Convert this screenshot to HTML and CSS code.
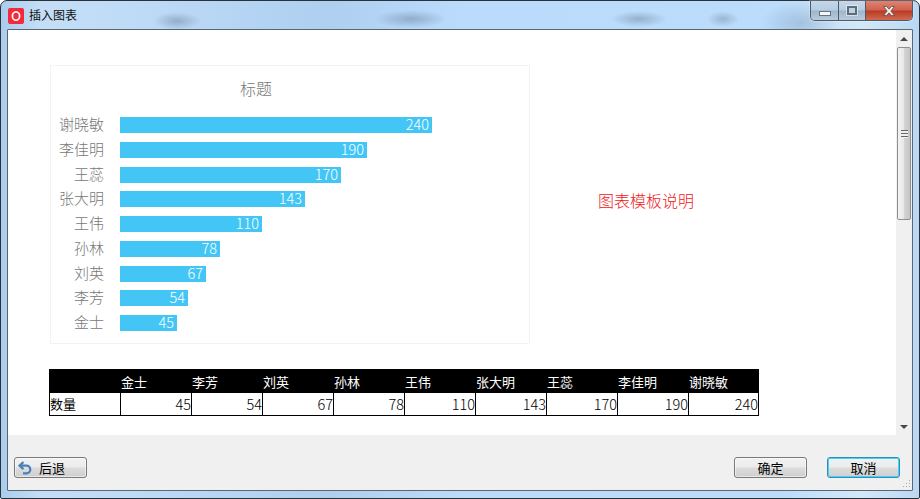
FILE: index.html
```html
<!DOCTYPE html>
<html lang="zh-CN">
<head>
<meta charset="utf-8">
<title>插入图表</title>
<link rel="stylesheet" href="styles.css">
</head>
<body>
<div class="window">
  <header class="titlebar">
    <svg class="app-icon" width="16" height="16" viewBox="0 0 16 16"><rect width="16" height="16" rx="2" fill="#f5293a"/><ellipse cx="8" cy="8" rx="3.6" ry="4.2" fill="none" stroke="#fff" stroke-width="1.7"/></svg>
    <span class="title-text">插入图表</span>
    <div class="caption">
      <div class="cap cap-min"><span class="min-glyph"></span></div>
      <div class="cap cap-max"><span class="max-glyph"></span></div>
      <div class="cap cap-close">
        <svg width="16" height="12" viewBox="0 0 16 12"><path d="M2.500 1.500h3L8 4.200l2.500-2.700h3L9.800 6l3.700 4.500h-3L8 7.800l-2.500 2.700h-3L6.200 6z" fill="#f4f0ee" stroke="#5c4a48" stroke-width=".8"/></svg>
      </div>
    </div>
  </header>
  <div class="client">
    <div class="main">
      <div class="scroll-content">
        <div class="top-row">
          <section class="chart">
            <div class="chart-title">标题</div>
            <div class="chart-rows">
              <div class="row"><span class="label">谢晓敏</span><div class="bar" style="width:312px">240</div></div>
              <div class="row"><span class="label">李佳明</span><div class="bar" style="width:247px">190</div></div>
              <div class="row"><span class="label">王蕊</span><div class="bar" style="width:221px">170</div></div>
              <div class="row"><span class="label">张大明</span><div class="bar" style="width:185px">143</div></div>
              <div class="row"><span class="label">王伟</span><div class="bar" style="width:142px">110</div></div>
              <div class="row"><span class="label">孙林</span><div class="bar" style="width:100px">78</div></div>
              <div class="row"><span class="label">刘英</span><div class="bar" style="width:86px">67</div></div>
              <div class="row"><span class="label">李芳</span><div class="bar" style="width:68px">54</div></div>
              <div class="row"><span class="label">金士</span><div class="bar" style="width:57px">45</div></div>
            </div>
          </section>
          <div class="desc">图表模板说明</div>
        </div>
        <table class="data">
          <tr class="head"><th></th><th>金士</th><th>李芳</th><th>刘英</th><th>孙林</th><th>王伟</th><th>张大明</th><th>王蕊</th><th>李佳明</th><th>谢晓敏</th></tr>
          <tr><td class="name">数量</td><td>45</td><td>54</td><td>67</td><td>78</td><td>110</td><td>143</td><td>170</td><td>190</td><td>240</td></tr>
        </table>
      </div>
      <div class="scrollbar">
        <div class="arrow-btn"><span class="arrow-up"></span></div>
        <div class="thumb"><span class="grip"></span></div>
        <div class="track"></div>
        <div class="arrow-btn arrow-btn-down"><span class="arrow-down"></span></div>
      </div>
    </div>
    <footer class="footer">
      <button class="btn btn-back">
        <svg width="15" height="14" viewBox="0 0 15 14"><path d="M5.500 1 1.500 4.700l4 3.500" fill="none" stroke="#4a80b8" stroke-width="2.200"/><path d="M2 4.700h6.500a3.800 3.800 0 0 1 0 7.600H5" fill="none" stroke="#4a80b8" stroke-width="2.200"/></svg>
        <span>后退</span>
      </button>
      <div class="spacer"></div>
      <button class="btn">确定</button>
      <button class="btn btn-focus">取消</button>
      <svg class="gripper" width="10" height="10" viewBox="0 0 10 10"><path d="M8 1h1v1H8zM5 4h1v1H5zM8 4h1v1H8zM2 7h1v1H2zM5 7h1v1H5zM8 7h1v1H8z" fill="#a8a8a8"/></svg>
    </footer>
  </div>
</div>
</body>
</html>
```
FILE: styles.css
```css
* { box-sizing: border-box; }
html, body { margin: 0; padding: 0; }
body {
  width: 920px;
  height: 499px;
  overflow: hidden;
  background: #fff;
  font-family: "Noto Sans CJK SC", "Liberation Sans", sans-serif;
}
.window {
  width: 920px;
  height: 499px;
  display: flex;
  flex-direction: column;
  padding: 0 6px 7px;
  border: 1px solid #2c3138;
  border-radius: 7px 7px 2px 2px;
  background:
    radial-gradient(ellipse 24px 9px at 176px 20px, rgba(90,110,140,.4), transparent),
    radial-gradient(ellipse 36px 9px at 410px 18px, rgba(90,110,140,.4), transparent),
    radial-gradient(ellipse 28px 8px at 638px 18px, rgba(90,110,140,.4), transparent),
    radial-gradient(ellipse 16px 8px at 722px 18px, rgba(90,110,140,.35), transparent),
    radial-gradient(ellipse 40px 22px at 800px 22px, rgba(120,150,185,.4), transparent),
    linear-gradient(90deg, #a9cdee 0, #c4def6 40px, #bedbf7 130px, #aecff0 330px, #badbfb 460px, #bcdcfb 780px, #d3e8f9 860px, #b9d8f4 100%);
}
.titlebar {
  height: 28px;
  flex: none;
  display: flex;
  align-items: flex-start;
}
.app-icon { margin: 7px 0 0 1px; flex: none; }
.title-text {
  margin: 5px 0 0 5px;
  font-size: 12px;
  line-height: 18px;
  color: #111;
}
.caption {
  margin-left: auto;
  display: flex;
  height: 20px;
  border: 1px solid #4e5a68;
  border-top: 0;
  border-radius: 0 0 5px 5px;
  overflow: hidden;
  box-shadow: 0 0 0 1px rgba(255,255,255,.25);
}
.cap {
  display: flex;
  align-items: center;
  justify-content: center;
  background: linear-gradient(#c5d7e8 0, #b6cde2 48%, #9db5cb 52%, #b8cbdc 100%);
}
.cap-min { width: 28px; border-right: 1px solid #4e5a68; }
.cap-max { width: 27px; border-right: 1px solid #4e5a68; }
.cap-close {
  width: 46px;
  background: linear-gradient(#dd8474 0, #d2604c 48%, #b93a22 52%, #cf6a52 100%);
}
.min-glyph {
  display: block;
  width: 12px;
  height: 5px;
  margin-top: 5px;
  background: #f4f7fa;
  border: 1px solid #6a7480;
}
.max-glyph {
  display: block;
  width: 10px;
  height: 9px;
  border: 2px solid #5f6c7a;
  outline: 1px solid rgba(255,255,255,.5);
  background: #c0d2e2;
}
.client {
  flex: 1;
  min-height: 0;
  display: flex;
  flex-direction: column;
  border: 1px solid #5b6670;
  border-radius: 1px;
  background: #f0f0f0;
}
.main {
  height: 405px;
  flex: none;
  display: flex;
  background: #fff;
}
.scroll-content {
  width: 888px;
  flex: none;
  padding: 35px 0 0 41px;
}
.top-row { display: flex; align-items: center; }
.chart {
  width: 480px;
  height: 279px;
  margin-left: 1px;
  flex: none;
  border: 1px solid #f3f3f3;
  display: flex;
  flex-direction: column;
}
.chart-title {
  height: 51px;
  padding: 12px 68px 0 0;
  text-align: center;
  font-size: 16px;
  font-weight: 300;
  line-height: 20px;
  color: #777;
}
.chart-rows {
  display: grid;
  grid-auto-rows: 24.75px;
}
.row {
  display: flex;
  align-items: flex-start;
}
.label {
  width: 53px;
  flex: none;
  text-align: right;
  font-size: 15px;
  font-weight: 300;
  line-height: 14px;
  white-space: nowrap;
  color: #777;
}
.bar {
  height: 16px;
  margin-left: 16px;
  padding-right: 3px;
  background: #43c6f6;
  color: #fff;
  font-size: 14.500px;
  font-weight: 300;
  line-height: 14px;
  text-align: right;
}
.desc {
  margin: 0 0 9px 68px;
  font-size: 16px;
  font-weight: 300;
  line-height: 20px;
  color: #f01818;
}
.data {
  margin-top: 25px;
  border-collapse: collapse;
  table-layout: fixed;
  width: 709px;
  font-size: 13px;
}
.data th, .data td {
  width: 71px;
  padding: 0;
  font-weight: 400;
}
.data th:last-child, .data td:last-child { width: 70px; }
.data .head { background: #000; color: #fff; height: 23px; }
.data th { text-align: left; border: 1px solid #000; }
.data td {
  height: 23px;
  text-align: right;
  color: #000;
  border: 1px solid #000;
  font-size: 14.500px;
  font-weight: 300;
  line-height: 20px;
}
.data td.name { text-align: left; font-size: 13px; font-weight: 400; }
.scrollbar {
  width: 16px;
  flex: none;
  display: flex;
  flex-direction: column;
  background: #f0f0f0;
}
.arrow-btn {
  height: 17px;
  flex: none;
  display: flex;
  align-items: center;
  justify-content: center;
}
.arrow-up, .arrow-down {
  width: 0;
  height: 0;
  border-left: 4px solid transparent;
  border-right: 4px solid transparent;
}
.arrow-up { border-bottom: 4px solid #3f4a55; }
.arrow-down { border-top: 4px solid #3f4a55; }
.thumb {
  height: 173px;
  flex: none;
  margin: 0 1px;
  border: 1px solid #8f8f8f;
  border-radius: 2px;
  background: linear-gradient(90deg, #f3f3f3 0, #e9e9e9 45%, #d2d2d2 55%, #c6c6c6 100%);
  display: flex;
  align-items: center;
  justify-content: center;
}
.grip {
  display: block;
  width: 7px;
  height: 8px;
  background: repeating-linear-gradient(#666 0 1px, #eee 1px 3px);
}
.track { flex: 1; }
.arrow-btn-down { height: 16px; }
.footer {
  flex: 1;
  position: relative;
  display: flex;
  align-items: flex-start;
  padding: 22px 12px 0 6px;
  gap: 20px;
}
.spacer { flex: 1; }
.btn {
  width: 73px;
  height: 21px;
  padding: 0;
  display: flex;
  align-items: center;
  justify-content: center;
  gap: 5px;
  border: 1px solid #7a7a7a;
  border-radius: 3px;
  background: linear-gradient(#f2f2f2 0, #ebebeb 48%, #dcdcdc 52%, #cfcfcf 100%);
  font: 13px/18px "Noto Sans CJK SC", sans-serif;
  color: #000;
  box-shadow: inset 0 0 0 1px rgba(255,255,255,.5);
}
.btn-back { justify-content: flex-start; padding-left: 3px; gap: 6px; }
.btn-focus { border-color: #2c8fb5; box-shadow: inset 0 0 0 1px #45d3fb; }
.gripper { position: absolute; right: 1px; bottom: 1px; }
```
